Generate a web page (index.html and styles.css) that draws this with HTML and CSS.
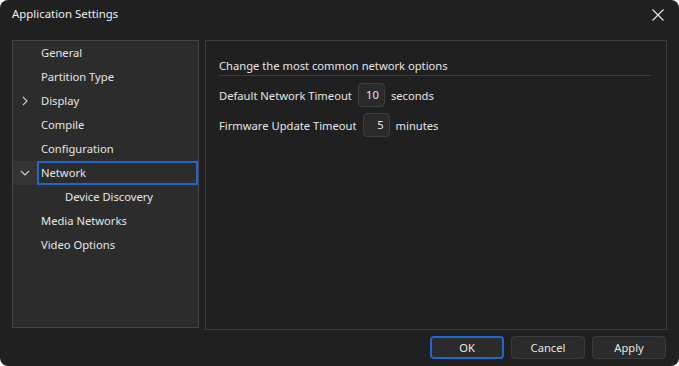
FILE: index.html
```html
<html>

<head>
    <title>Application Settings</title>
    <link rel="stylesheet" href="styles.css">
</head>

<body>
    <div class="window">
        <div class="titlebar">
            <span class="title">Application Settings</span>
            <svg class="close" width="12" height="12" viewBox="0 0 12 12">
                <path d="M0.5 0.5 L11.5 11.5 M11.5 0.5 L0.5 11.5" stroke="#e8e8e8" stroke-width="1.1" fill="none"/>
            </svg>
        </div>
        <div class="main">
            <div class="tree">
                <div class="item"><span class="arrow"></span><span class="label">General</span></div>
                <div class="item"><span class="arrow"></span><span class="label">Partition Type</span></div>
                <div class="item">
                    <span class="arrow">
                        <svg width="10" height="10" viewBox="0 0 10 10"><path d="M3 1 L7 5 L3 9" stroke="#d0d0d0" stroke-width="1.1" fill="none"/></svg>
                    </span>
                    <span class="label">Display</span>
                </div>
                <div class="item"><span class="arrow"></span><span class="label">Compile</span></div>
                <div class="item"><span class="arrow"></span><span class="label">Configuration</span></div>
                <div class="item selected">
                    <span class="arrow">
                        <svg width="10" height="10" viewBox="0 0 10 10"><path d="M1 3 L5 7 L9 3" stroke="#d0d0d0" stroke-width="1.1" fill="none"/></svg>
                    </span>
                    <span class="label">Network</span>
                </div>
                <div class="item child"><span class="arrow"></span><span class="label">Device Discovery</span></div>
                <div class="item"><span class="arrow"></span><span class="label">Media Networks</span></div>
                <div class="item"><span class="arrow"></span><span class="label">Video Options</span></div>
            </div>
            <div class="page">
                <div class="heading">Change the most common network options</div>
                <div class="row">
                    <span>Default Network Timeout</span>
                    <span class="spin">10</span>
                    <span>seconds</span>
                </div>
                <div class="row">
                    <span>Firmware Update Timeout</span>
                    <span class="spin">5</span>
                    <span>minutes</span>
                </div>
            </div>
        </div>
        <div class="buttons">
            <button class="btn default">OK</button>
            <button class="btn">Cancel</button>
            <button class="btn">Apply</button>
        </div>
    </div>
</body>

</html>
```

FILE: styles.css
```css
html, body {
    margin: 0;
    height: 100%;
    background: #ffffff;
}

body {
    font-family: 'Noto Sans', 'Open Sans', sans-serif;
    font-size: 11.2px;
    color: #e6e6e6;
}

.window {
    box-sizing: border-box;
    height: 366px;
    width: 679px;
    background-color: #202020;
    border-radius: 8px;
    display: flex;
    flex-direction: column;
    padding: 0 12px 0 12px;
}

.titlebar {
    display: flex;
    align-items: center;
    justify-content: space-between;
    height: 27px;
    margin-bottom: 13px;
}

.title {
    font-size: 11.4px;
    color: #f0f0f0;
}

.close {
    margin-right: 3px;
    margin-top: 2px;
}

.main {
    display: flex;
    gap: 6px;
}

.tree {
    box-sizing: border-box;
    width: 187px;
    height: 288px;
    background-color: #2c2c2c;
    border: 1px solid #464646;
}

.item {
    display: flex;
    align-items: center;
    height: 24px;
}

.arrow {
    width: 24px;
    display: flex;
    justify-content: center;
    align-items: center;
}

.label {
    flex: 1;
    box-sizing: border-box;
    height: 24px;
    line-height: 24px;
    padding-left: 4px;
}

.child .label {
    padding-left: 28px;
}

.selected {
    background-color: #343434;
}

.selected .label {
    border: 2px solid #1e66d0;
    line-height: 20px;
    padding-left: 2px;
    background-color: #2c2c2c;
}

.page {
    box-sizing: border-box;
    width: 462px;
    height: 290px;
    border: 1px solid #3c3c3c;
    padding: 17px 15px 0 13px;
}

.heading {
    padding-bottom: 2px;
    border-bottom: 1px solid #3c3c3c;
    margin-bottom: 7px;
}

.row {
    display: flex;
    align-items: center;
    gap: 6px;
    height: 24px;
    margin-bottom: 6px;
}

.spin {
    box-sizing: border-box;
    height: 24px;
    min-width: 27px;
    padding: 0 5px;
    line-height: 22px;
    text-align: right;
    background-color: #2a2a2a;
    border: 1px solid #3e3e3e;
    border-radius: 4px;
}

.buttons {
    display: flex;
    justify-content: flex-end;
    gap: 7px;
    margin-top: 6px;
    margin-right: 1px;
}

.btn {
    box-sizing: border-box;
    width: 74px;
    height: 23px;
    font-family: 'Noto Sans', 'Open Sans', sans-serif;
    font-size: 11.2px;
    color: #e6e6e6;
    background-color: #2b2b2b;
    border: 1px solid #3c3c3c;
    border-radius: 4px;
}

.default {
    border: 2px solid #1e66d0;
}
```
